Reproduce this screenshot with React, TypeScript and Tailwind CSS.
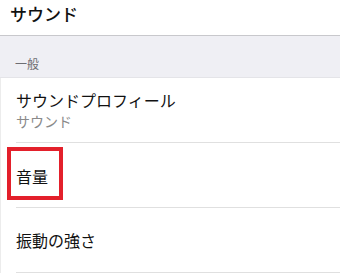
export default function App() {
  return (
    <div
      className="relative w-[340px] h-[278px] overflow-hidden bg-white text-[#111]"
      style={{ fontFamily: '"Noto Sans CJK JP", "Noto Sans", sans-serif' }}
    >
      <div className="h-[36px] border-b border-[#c8c8cc] bg-white pl-[10px] pt-[2px]">
        <h1 className="text-[17px] leading-6 font-medium">サウンド</h1>
      </div>

      <div className="h-[42px] bg-[#efeff4] border-b border-[#e4e4e8] flex items-end pl-[15px] pb-[3px]">
        <span className="text-[12px] leading-5 text-[#6d6d72]">一般</span>
      </div>

      <div className="border-l border-[#ececec]">
        <div className="pl-[15px]">
          <div className="h-[65px] border-b border-[#e0e0e0] pt-[11px]">
            <div className="text-[16px] leading-[22px]">サウンドプロフィール</div>
            <div className="text-[14px] leading-5 text-[#8a8a8a]">サウンド</div>
          </div>
          <div className="h-[65px] border-b border-[#e0e0e0] flex items-center">
            <div className="text-[16px] leading-6 pt-[2px]">音量</div>
          </div>
          <div className="h-[65px] border-b border-[#e0e0e0] flex items-center">
            <div className="text-[16px] leading-6">振動の強さ</div>
          </div>
        </div>
      </div>

      <div className="absolute left-[7px] top-[147px] w-[56px] h-[53px] border-[4px] border-[#e3202b] pointer-events-none" />
    </div>
  );
}
